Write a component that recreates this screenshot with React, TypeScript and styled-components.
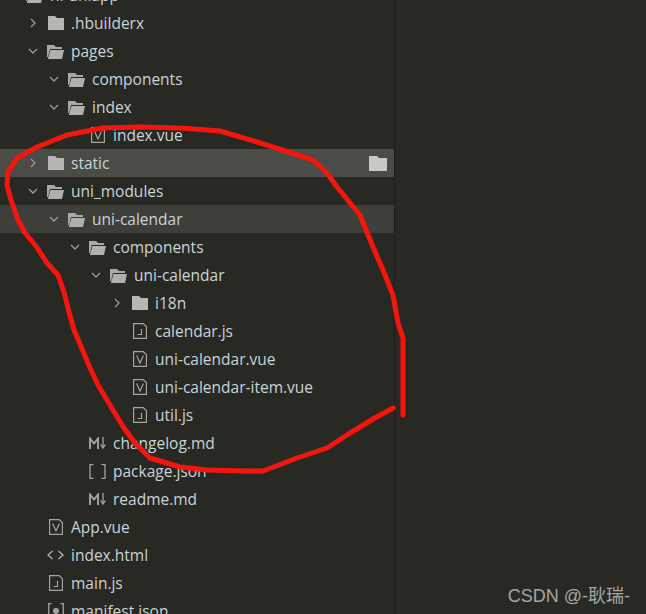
import React from "react";
import styled, { createGlobalStyle } from "styled-components";

type Kind = "open" | "closed" | "vue" | "js" | "md" | "json" | "html" | "gear";

interface Item {
  name: string;
  depth: number;
  kind: Kind;
  tone?: "hover" | "active";
}

const items: Item[] = [
  { name: "hi-uniapp", depth: -1, kind: "open" },
  { name: ".hbuilderx", depth: 0, kind: "closed" },
  { name: "pages", depth: 0, kind: "open" },
  { name: "components", depth: 1, kind: "open" },
  { name: "index", depth: 1, kind: "open" },
  { name: "index.vue", depth: 2, kind: "vue" },
  { name: "static", depth: 0, kind: "closed", tone: "hover" },
  { name: "uni_modules", depth: 0, kind: "open" },
  { name: "uni-calendar", depth: 1, kind: "open", tone: "active" },
  { name: "components", depth: 2, kind: "open" },
  { name: "uni-calendar", depth: 3, kind: "open" },
  { name: "i18n", depth: 4, kind: "closed" },
  { name: "calendar.js", depth: 4, kind: "js" },
  { name: "uni-calendar.vue", depth: 4, kind: "vue" },
  { name: "uni-calendar-item.vue", depth: 4, kind: "vue" },
  { name: "util.js", depth: 4, kind: "js" },
  { name: "changelog.md", depth: 2, kind: "md" },
  { name: "package.json", depth: 2, kind: "json" },
  { name: "readme.md", depth: 2, kind: "md" },
  { name: "App.vue", depth: 0, kind: "vue" },
  { name: "index.html", depth: 0, kind: "html" },
  { name: "main.js", depth: 0, kind: "js" },
  { name: "manifest.json", depth: 0, kind: "gear" },
];

const KindIcon = ({ kind }: { kind: Kind }) => {
  switch (kind) {
    case "closed":
      return (
        <svg width="16" height="14" viewBox="0 0 16 14">
          <path d="M0 0h7l2 2h7v12H0z" fill="#b6b6b3" />
        </svg>
      );
    case "open":
      return (
        <svg width="17" height="15" viewBox="0 0 17 15">
          <path d="M0 1h7l2 2h6v2H3L1 13H0z" fill="#a9a9a6" />
          <path d="M3.5 6H17l-2 9H0.8z" fill="#b0b0ad" />
        </svg>
      );
    case "vue":
      return (
        <svg width="14" height="16" viewBox="0 0 14 16" fill="none" stroke="#a4a4a1" strokeWidth="1.2">
          <path d="M.6.6h9.5l3.3 3v11.8H.6z" />
          <path d="M3.6 4.5 7 12l3.4-7.5" />
        </svg>
      );
    case "js":
      return (
        <svg width="14" height="16" viewBox="0 0 14 16" fill="none" stroke="#a4a4a1" strokeWidth="1.2">
          <path d="M.6.6h9.5l3.3 3v11.8H.6z" />
          <path d="M8.5 6v5.5H4.5" />
        </svg>
      );
    case "md":
      return (
        <svg width="17" height="12" viewBox="0 0 17 12" fill="none" stroke="#a4a4a1" strokeWidth="1.9">
          <path d="M1 12V1.5l4 5 4-5V12" />
          <path d="M14 0v10M11.6 7.5 14 11l2.4-3.5" strokeWidth="1.3" />
        </svg>
      );
    case "json":
      return (
        <svg width="17" height="15" viewBox="0 0 17 15" fill="none" stroke="#a4a4a1" strokeWidth="1.3">
          <path d="M4.5.7H1v13.6h3.5M12.5.7H16v13.6h-3.5" />
        </svg>
      );
    case "html":
      return (
        <svg width="17" height="10" viewBox="0 0 17 10" fill="none" stroke="#b0b0ad" strokeWidth="1.4">
          <path d="M5.5 1 1 5l4.5 4M11.5 1 16 5l-4.5 4" />
        </svg>
      );
    case "gear":
      return (
        <svg width="16" height="16" viewBox="0 0 16 16" fill="none" stroke="#a4a4a1" strokeWidth="1.3">
          <path d="M3.5.7H.7v14.6h2.8M12.5.7h2.8v14.6h-2.8" />
          <circle cx="8" cy="8" r="2.4" fill="#a4a4a1" />
        </svg>
      );
  }
};

const App = () => (
  <Screen>
    <GlobalStyle />
    <Sidebar>
      {items.map((item, i) => (
        <Row key={i} $depth={item.depth} $tone={item.tone}>
          <Twist>
            {item.kind === "open" && (
              <svg width="10" height="10" viewBox="0 0 10 10" fill="none" stroke="#9c9c99" strokeWidth="1.3">
                <path d="M1 3l4 4 4-4" />
              </svg>
            )}
            {item.kind === "closed" && (
              <svg width="10" height="10" viewBox="0 0 10 10" fill="none" stroke="#9c9c99" strokeWidth="1.3">
                <path d="M3 1l4 4-4 4" />
              </svg>
            )}
          </Twist>
          <IconSlot>
            <KindIcon kind={item.kind} />
          </IconSlot>
          <Name>{item.name}</Name>
          {item.tone === "hover" && (
            <RowAction>
              <svg width="18" height="15" viewBox="0 0 18 15">
                <path d="M0 0h8l2 2h8v13H0z" fill="#c8c8c5" />
              </svg>
            </RowAction>
          )}
        </Row>
      ))}
    </Sidebar>
    <EditorPane />
    <Scribble width="646" height="614" viewBox="0 0 646 614" fill="none">
      <path
        d="M403 415V338L398 323 393 295 383 270 373 247 360 215 337 187 327 173 313 160 273 147 257 142 220 131 180 128 140 127 103 128 67 135 37 147 17 158 8 172 7 185 11 200 18 220 25 233 36 246 47 263 58 275 64 292 69 312 74 330 80 344 90 368 98 385 113 410 124 428 135 443 150 458 180 467 207 470 243 471 263 471 297 458 327 448 347 435 373 419 393 408"
        stroke="#f5150f"
        strokeWidth="5"
        strokeLinejoin="round"
        strokeLinecap="round"
      />
    </Scribble>
    <Watermark>CSDN @-耿瑞-</Watermark>
  </Screen>
);

const GlobalStyle = createGlobalStyle`
  html, body {
    margin: 0;
    padding: 0;
    background: #282923;
  }
`;

const Screen = styled.div`
  position: relative;
  display: flex;
  width: 646px;
  height: 614px;
  overflow: hidden;
  background: #282923;
  font-family: "Open Sans", "Liberation Sans", sans-serif;
`;

const Sidebar = styled.div`
  width: 394px;
  flex-shrink: 0;
  margin-top: -19px;
`;

const EditorPane = styled.div`
  flex: 1;
  border-left: 1px solid #1c1d19;
  background: #282923;
`;

const rowBackground = { hover: "#4b4c46", active: "#3e3f38" };

const Row = styled.div<{ $depth: number; $tone?: "hover" | "active" }>`
  display: flex;
  align-items: center;
  height: 28px;
  padding-left: ${(p) => 28 + p.$depth * 21}px;
  padding-right: 8px;
  background: ${(p) => (p.$tone ? rowBackground[p.$tone] : "transparent")};
`;

const Twist = styled.span`
  display: flex;
  align-items: center;
  justify-content: center;
  width: 10px;
  height: 10px;
  flex-shrink: 0;
  margin-right: 9px;
`;

const IconSlot = styled.span`
  display: flex;
  align-items: center;
  justify-content: center;
  width: 17px;
  flex-shrink: 0;
  margin-right: 7px;
`;

const Name = styled.span`
  color: #c8d3da;
  font-size: 15.5px;
  white-space: nowrap;
`;

const RowAction = styled.span`
  display: flex;
  margin-left: auto;
  margin-right: -1px;
`;

const Scribble = styled.svg`
  position: absolute;
  top: 0;
  left: 0;
  pointer-events: none;
`;

const Watermark = styled.div`
  position: absolute;
  right: 16px;
  bottom: 7px;
  color: #a6a6a4;
  font-family: "Liberation Sans", "Noto Sans CJK SC", sans-serif;
  font-size: 18px;
`;

export default App;
